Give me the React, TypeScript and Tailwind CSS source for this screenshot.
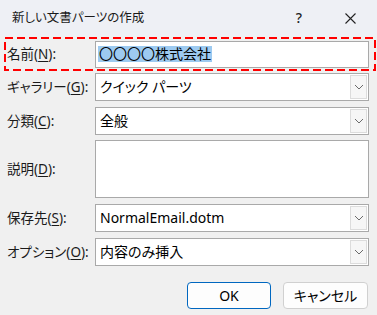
import React from "react";

const FONT = {
  fontFamily: '"Noto Sans", "Noto Sans CJK JP", sans-serif',
};

function Chevron() {
  return (
    <svg width="10" height="6" viewBox="0 0 10 6" fill="none">
      <path d="M1 1 L5 5 L9 1" stroke="#6b6b6b" strokeWidth="1" />
    </svg>
  );
}

function Label({ text, k }: { text: string; k: string }) {
  return (
    <div className="w-[88px] shrink-0 text-[13.5px] leading-[18px] text-[#1a1a1a] whitespace-nowrap">
      {text}(<span className="underline underline-offset-2">{k}</span>):
    </div>
  );
}

function Select({ value }: { value: string }) {
  return (
    <div className="flex h-[28px] w-[274px] shrink-0 items-stretch border border-[#a9a9a9] bg-white">
      <div className="flex flex-1 items-center pl-[4px] text-[14px] leading-[18px] text-black whitespace-nowrap">
        {value}
      </div>
      <div className="m-[1px] flex w-[17px] items-center justify-center border border-[#dcdcdc] bg-[#f6f6f6]">
        <Chevron />
      </div>
    </div>
  );
}

export default function App() {
  return (
    <div
      style={FONT}
      className="relative h-[315px] w-[377px] overflow-hidden bg-[#f0f0f0] [font-feature-settings:'palt']"
    >
      {/* title bar */}
      <div className="flex h-[36px] items-center bg-[#eef0f5] pl-[12px]">
        <div className="text-[12.5px] leading-[16px] text-[#1a1a1a]">新しい文書パーツの作成</div>
        <div className="ml-auto flex items-center">
          <div className="w-[12px] text-center text-[14px] font-medium leading-[16px] text-[#222]">?</div>
          <div className="ml-[40px] mr-[21px]">
            <svg width="11" height="11" viewBox="0 0 11 11">
              <path d="M0.5 0.5 L10.5 10.5 M10.5 0.5 L0.5 10.5" stroke="#222" strokeWidth="1.1" />
            </svg>
          </div>
        </div>
      </div>

      {/* name row with dashed highlight */}
      <div className="relative mx-[4px] mt-[1px] flex h-[34px] items-center pl-[3px]">
        <Label text="名前" k="N" />
        <div className="flex h-[27px] w-[274px] shrink-0 items-center border border-[#a9a9a9] bg-white pl-[2px]">
          <span className="bg-[#9dcaf0] px-[1px] text-[14px] leading-[16px] text-black">〇〇〇〇株式会社</span>
        </div>
        <svg className="pointer-events-none absolute inset-0" width="372" height="34" viewBox="0 0 372 34">
          <rect x="1" y="1" width="370" height="32" fill="none" stroke="#ff0000" strokeWidth="2" strokeDasharray="8 4" />
        </svg>
      </div>

      <div className="ml-[7px] mt-[2px] flex items-center">
        <Label text="ギャラリー" k="G" />
        <Select value="クイック パーツ" />
      </div>

      <div className="ml-[7px] mt-[6px] flex items-center">
        <Label text="分類" k="C" />
        <Select value="全般" />
      </div>

      <div className="ml-[7px] mt-[5px] flex items-center">
        <Label text="説明" k="D" />
        <div className="h-[58px] w-[274px] shrink-0 border border-[#a9a9a9] bg-white" />
      </div>

      <div className="ml-[7px] mt-[6px] flex items-center">
        <Label text="保存先" k="S" />
        <Select value="NormalEmail.dotm" />
      </div>

      <div className="ml-[7px] mt-[6px] flex items-center">
        <Label text="オプション" k="O" />
        <Select value="内容のみ挿入" />
      </div>

      <div className="mt-[16px] flex justify-end gap-[12px] pr-[9px]">
        <button className="flex h-[27px] w-[84px] items-center justify-center rounded-[4px] border border-[#0067c0] bg-[#fdfdfd] text-[14px] leading-[16px] text-black">
          OK
        </button>
        <button className="flex h-[27px] w-[85px] items-center justify-center rounded-[4px] border border-[#d0d0d0] bg-[#fdfdfd] text-[14px] leading-[16px] text-black">
          キャンセル
        </button>
      </div>
    </div>
  );
}
